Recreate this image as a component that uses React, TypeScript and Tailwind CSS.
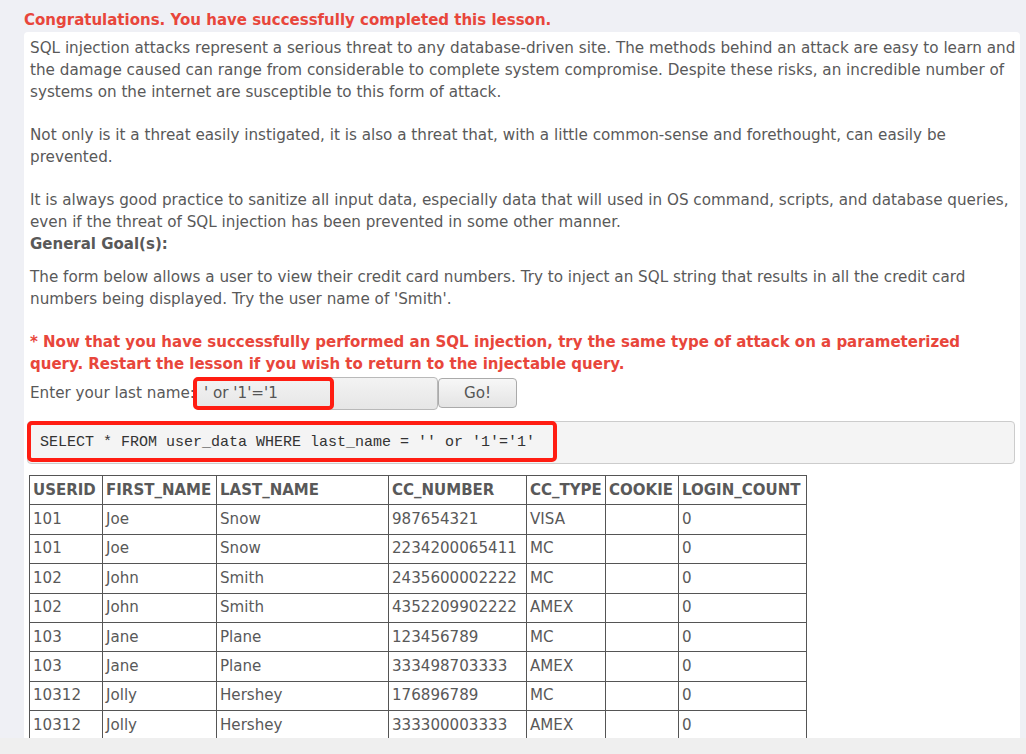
const rows = [
  ["101", "Joe", "Snow", "987654321", "VISA", "", "0"],
  ["101", "Joe", "Snow", "2234200065411", "MC", "", "0"],
  ["102", "John", "Smith", "2435600002222", "MC", "", "0"],
  ["102", "John", "Smith", "4352209902222", "AMEX", "", "0"],
  ["103", "Jane", "Plane", "123456789", "MC", "", "0"],
  ["103", "Jane", "Plane", "333498703333", "AMEX", "", "0"],
  ["10312", "Jolly", "Hershey", "176896789", "MC", "", "0"],
  ["10312", "Jolly", "Hershey", "333300003333", "AMEX", "", "0"],
];

const headers = ["USERID", "FIRST_NAME", "LAST_NAME", "CC_NUMBER", "CC_TYPE", "COOKIE", "LOGIN_COUNT"];
const widths = ["w-[73px]", "w-[114px]", "w-[172px]", "w-[138px]", "w-[79px]", "w-[73px]", "w-[128px]"];

export default function App() {
  return (
    <div className="h-[754px] flex flex-col overflow-hidden bg-[#eff0f5] font-['DejaVu_Sans',sans-serif] text-[15px] text-[#595959]">
      <div className="flex-1 min-h-0 overflow-hidden pl-6 pr-1.5">
        {/* lesson status */}
        <div className="h-8 pt-[10px] font-bold text-[#e8463b] leading-[20px]">
          Congratulations. You have successfully completed this lesson.
        </div>

        {/* lesson content */}
        <div className="bg-white rounded-t pl-1.5 pr-1 pt-[5px] leading-[22px]">
          <div className="text-[15.2px]">
            <p>
              SQL injection attacks represent a serious threat to any database-driven site. The methods behind an attack are easy to learn and
              the damage caused can range from considerable to complete system compromise. Despite these risks, an incredible number of
              systems on the internet are susceptible to this form of attack.
            </p>
            <div className="h-[21px]" />
            <p>
              Not only is it a threat easily instigated, it is also a threat that, with a little common-sense and forethought, can easily be
              prevented.
            </p>
            <div className="h-[21px]" />
            <p>
              It is always good practice to sanitize all input data, especially data that will used in OS command, scripts, and database queries,
              even if the threat of SQL injection has been prevented in some other manner.
            </p>
          </div>
          <div className="font-bold">General Goal(s):</div>
          <p className="mt-[11px] text-[15.2px]">
            The form below allows a user to view their credit card numbers. Try to inject an SQL string that results in all the credit card
            numbers being displayed. Try the user name of 'Smith'.
          </p>
          <p className="mt-[21px] font-bold text-[#e8463b]">
            * Now that you have successfully performed an SQL injection, try the same type of attack on a parameterized query. Restart the
            lesson if you wish to return to the injectable query.
          </p>

          {/* form */}
          <div className="flex items-center h-[34px] mt-px text-[15.2px]">
            <span>Enter your last name:</span>
            <div className="relative">
              <div className="w-[243px] h-[33px] border border-[#b9b9b9] rounded-sm bg-gradient-to-b from-[#f3f3f3] to-[#e6e6e6] pl-2 flex items-center text-[#555]">
                ' or '1'='1
              </div>
              <div className="absolute left-[-2px] top-0 w-[141px] h-[33px] border-4 border-[#ff1d12] rounded-[5px]" />
            </div>
            <button className="w-[79px] h-[30px] border border-[#aaa] rounded-sm bg-gradient-to-b from-[#f7f7f7] to-[#e4e4e4] text-[#555]">
              Go!
            </button>
          </div>

          {/* query */}
          <div className="relative mt-[11px] ml-[-3px] mr-px h-[43px] bg-[#f4f4f4] border border-[#ccc] rounded flex items-center pl-[12px] font-['Liberation_Mono',monospace] text-[15px] text-[#333]">
            SELECT * FROM user_data WHERE last_name = '' or '1'='1'
            <div className="absolute left-[-1px] top-[-1px] w-[530px] h-[41px] border-4 border-[#ff1d12] rounded-[5px]" />
          </div>

          {/* results */}
          <table className="mt-[11px] ml-[-1px] table-fixed border-collapse">
            <thead>
              <tr>
                {headers.map((h, i) => (
                  <th key={h} className={`${widths[i]} border border-[#555] px-[3px] py-[3.5px] text-left font-bold leading-[21.4px]`}>
                    {h}
                  </th>
                ))}
              </tr>
            </thead>
            <tbody>
              {rows.map((r, ri) => (
                <tr key={ri}>
                  {r.map((c, ci) => (
                    <td key={ci} className="border border-[#555] px-[3px] py-[3.5px] leading-[21.4px] whitespace-nowrap overflow-hidden text-[15.1px]">
                      {c}
                    </td>
                  ))}
                </tr>
              ))}
            </tbody>
          </table>
        </div>
      </div>
      <div className="h-4 shrink-0 bg-[#efefef]" />
    </div>
  );
}
